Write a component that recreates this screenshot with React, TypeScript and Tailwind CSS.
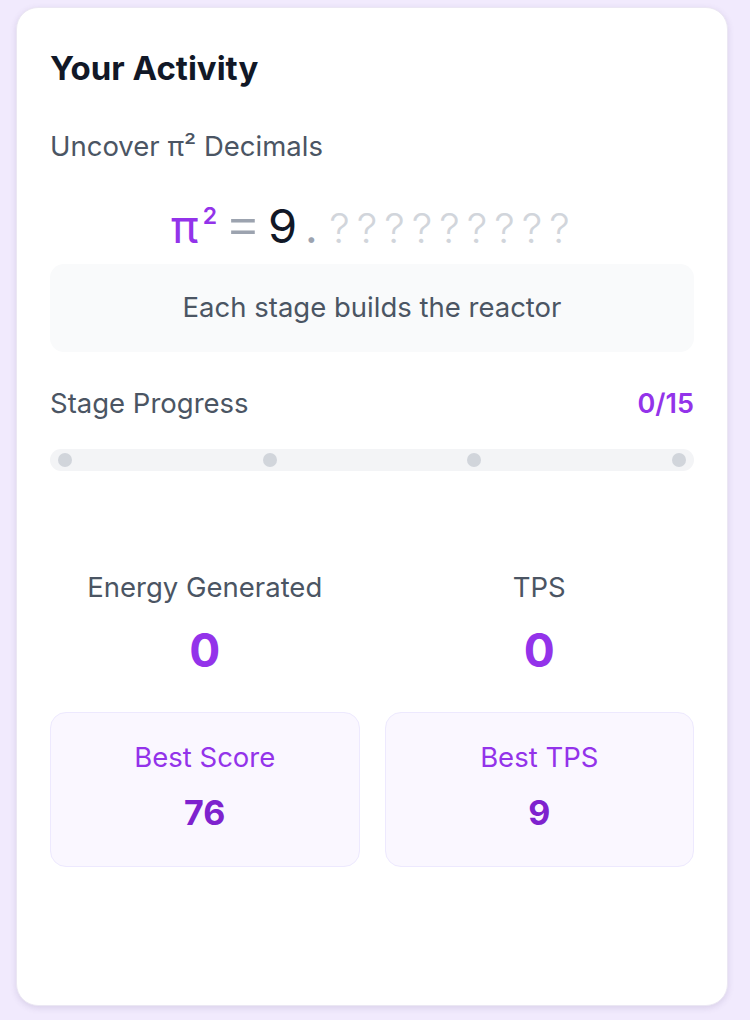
import React from "react";

export default function App() {
  const font = { fontFamily: "Inter, 'Noto Sans', 'Liberation Sans', sans-serif" };
  return (
    <div className="min-h-[1020px] w-[750px] bg-[#f1eafd] pt-[7px] pl-[16px]" style={font}>
      <div className="w-[712px] h-[999px] bg-white rounded-[22px] border border-[#ebe7f3] shadow-[0_2px_6px_rgba(80,60,120,0.15)] px-[33px] pt-[41px]">
        <h1 className="text-[33px] leading-[38px] font-bold text-[#111827]">Your Activity</h1>
        <p className="mt-[43px] text-[27.5px] leading-[33px] text-[#4b5563]">Uncover π² Decimals</p>

        <div className="mt-[30px] flex items-baseline justify-center h-[50px] leading-none">
          <span className="text-[46px] text-[#9333ea]">π</span>
          <span className="text-[23px] text-[#9333ea] font-semibold relative -top-[19px] ml-[4px]">2</span>
          <span className="text-[58px] font-light text-[#9ca3af] ml-[7px]">=</span>
          <span className="text-[47px] text-[#111827] ml-[6px]">9</span>
          <span className="text-[44px] text-[#9ca3af] ml-[8px]">.</span>
          <span className="flex ml-[8px]">
            {Array.from({ length: 9 }).map((_, i) => (
              <span key={i} className="text-[41px] font-light text-[#d1d5db] w-[27.5px] text-center">?</span>
            ))}
          </span>
        </div>

        <div className="mt-[21px] h-[88px] rounded-[14px] bg-[#f9fafb] flex items-center justify-center">
          <span className="text-[27.5px] text-[#4b5563]">Each stage builds the reactor</span>
        </div>

        <div className="mt-[35px] flex items-center justify-between">
          <span className="text-[27.5px] leading-[33px] text-[#4b5563]">Stage Progress</span>
          <span className="text-[27px] leading-[33px] font-semibold text-[#9333ea]">0/15</span>
        </div>

        <div className="mt-[29px] h-[22px] rounded-full bg-[#f3f4f6] flex items-center justify-between px-[8px]">
          {Array.from({ length: 4 }).map((_, i) => (
            <span key={i} className="w-[14px] h-[14px] rounded-full bg-[#d1d5db]" />
          ))}
        </div>

        <div className="mt-[100px] grid grid-cols-2 gap-[25px]">
          <div className="flex flex-col items-center">
            <span className="text-[27.5px] leading-[33px] text-[#4b5563]">Energy Generated</span>
            <span className="mt-[23px] text-[46px] leading-none font-bold text-[#9333ea]">0</span>
          </div>
          <div className="flex flex-col items-center">
            <span className="text-[27.5px] leading-[33px] text-[#4b5563]">TPS</span>
            <span className="mt-[23px] text-[46px] leading-none font-bold text-[#9333ea]">0</span>
          </div>
        </div>

        <div className="mt-[39px] grid grid-cols-2 gap-[25px]">
          {[
            ["Best Score", "76"],
            ["Best TPS", "9"],
          ].map(([label, value]) => (
            <div key={label} className="h-[155px] rounded-[16px] border border-[#ede9fe] bg-[#faf7ff] flex flex-col items-center pt-[28px]">
              <span className="text-[27.5px] leading-[33px] text-[#9333ea]">{label}</span>
              <span className="mt-[22px] text-[34px] leading-none font-bold text-[#7e22ce]">{value}</span>
            </div>
          ))}
        </div>
      </div>
    </div>
  );
}
